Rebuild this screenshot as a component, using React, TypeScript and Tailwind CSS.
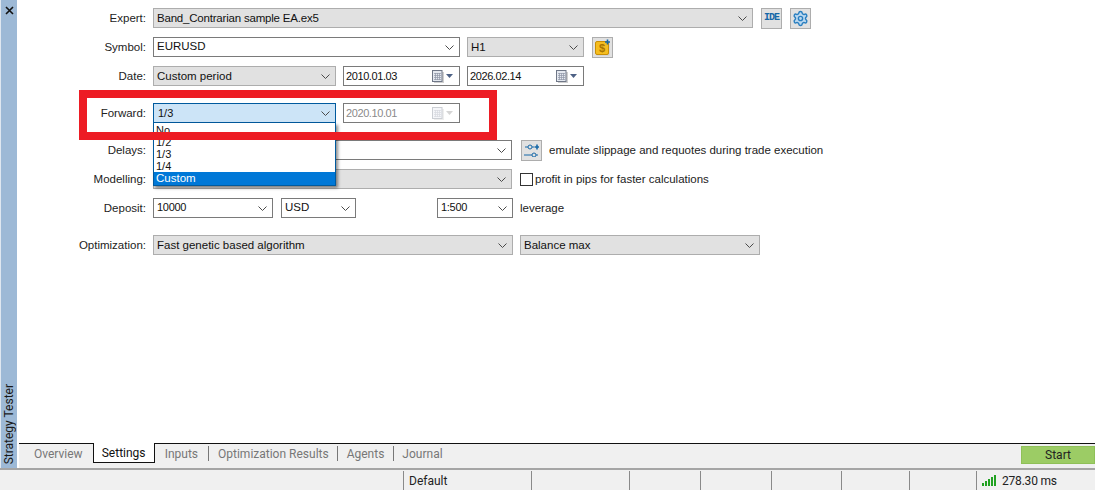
import { Settings } from "lucide-react"
import type { ReactNode } from "react"

const sans = { fontFamily: '"Liberation Sans", sans-serif' }

function Chevron() {
  return (
    <svg width="9" height="5" viewBox="0 0 9 5" className="shrink-0">
      <path d="M0.5 0.5 L4.5 4.5 L8.5 0.5" fill="none" stroke="#4a4a4a" strokeWidth="1" />
    </svg>
  )
}

function Select({ width, value, gray, num, tight }: { width: string; value?: string; gray?: boolean; num?: boolean; tight?: boolean }) {
  return (
    <div
      className={`${width} h-5 shrink-0 flex items-center justify-between pl-[3px] pr-[5px] border leading-none text-[#111] ${
        gray ? "bg-[#e1e1e1] border-[#adadad]" : "bg-white border-[#7a7a7a]"
      } ${num ? "text-[11px] tracking-[-0.3px]" : "text-[11.5px]"} ${tight ? "tracking-[-0.2px]" : ""}`}
    >
      <span className={`whitespace-pre ${gray ? "pt-[1px]" : "pb-[1px]"}`}>{value}</span>
      <Chevron />
    </div>
  )
}

function Calendar({ off }: { off?: boolean }) {
  return (
    <span className={`flex items-center gap-[2px] ${off ? "opacity-35" : ""}`}>
      <svg width="12" height="13" viewBox="0 0 12 13">
        <rect x="2" y="2" width="10" height="11" fill="#cfcfcf" />
        <rect x="0.5" y="0.5" width="9.5" height="11" fill="#e4e8ef" stroke="#6f7787" />
        <path d="M2 3.5h7M2 5.5h7M2 7.5h7M2 9.5h7M3.5 3v7M5.5 3v7M7.5 3v7" stroke="#8f97a8" strokeWidth="0.7" />
      </svg>
      <svg width="8" height="4" viewBox="0 0 8 4">
        <path d="M0 0h7L3.5 4z" fill={off ? "#888" : "#4d6185"} />
      </svg>
    </span>
  )
}

function DateBox({ value, off }: { value: string; off?: boolean }) {
  return (
    <div
      className={`w-[117px] h-5 shrink-0 flex items-center justify-between pl-[2px] pr-[5px] border bg-white border-[#7a7a7a] text-[11px] tracking-[-0.4px] leading-none ${
        off ? "text-[#8a8a8a]" : "text-[#111]"
      }`}
    >
      <span>{value}</span>
      <Calendar off={off} />
    </div>
  )
}

function IconButton({ children }: { children: ReactNode }) {
  return (
    <div className="w-[21px] h-[21px] shrink-0 flex items-center justify-center bg-[#e1e1e1] border border-[#adadad]">
      {children}
    </div>
  )
}

function Row({ label, mt, children }: { label: string; mt: string; children: ReactNode }) {
  return (
    <div className={`flex items-center h-5 ${mt}`}>
      <span className="w-[127px] pr-[7px] pt-[2px] text-right text-[11.5px] leading-none text-[#222] shrink-0">
        {label}
      </span>
      <div className="flex items-center">{children}</div>
    </div>
  )
}

function Tab({ children }: { children: string }) {
  return <span className="text-[12px] text-[#777] leading-none">{children}</span>
}

export default function App() {
  return (
    <div className="relative w-[1095px] h-[490px] overflow-hidden bg-white flex flex-col" style={sans}>
      <div className="flex flex-1 min-h-0">
        {/* side strip */}
        <div className="w-[17px] shrink-0 bg-[#9db9d6] border-l border-[#dfe7f0] flex flex-col items-center justify-between pt-[6px] pb-[4px]">
          <svg width="9" height="9" viewBox="0 0 9 9">
            <path d="M1 1l7 7M8 1L1 8" stroke="#111" strokeWidth="1.6" />
          </svg>
          <span className="[writing-mode:vertical-rl] rotate-180 text-[12px] leading-none text-[#1a1a1a] font-['Roboto',sans-serif]">
            Strategy Tester
          </span>
        </div>

        <div className="flex-1 flex flex-col min-w-0 pl-[2px]">
          {/* form */}
          <div className="flex-1 pl-[7px] pt-2 relative min-h-0">
            <Row label="Expert:" mt="">
              <Select width="w-[600px]" value="Band_Contrarian sample EA.ex5" gray tight />
              <div className="ml-2">
                <IconButton>
                  <span className="text-[10px] font-bold text-[#1668a8] leading-none font-['Liberation_Mono',monospace] tracking-[-1px]">
                    IDE
                  </span>
                </IconButton>
              </div>
              <div className="ml-2">
                <IconButton>
                  <Settings size={17} fill="#bcd9f0" stroke="#2a7fc0" strokeWidth={2} />
                </IconButton>
              </div>
            </Row>

            <Row label="Symbol:" mt="mt-[9px]">
              <Select width="w-[307px]" value="EURUSD" />
              <div className="ml-[7px]">
                <Select width="w-[117px]" value="H1" gray />
              </div>
              <div className="ml-2">
                <IconButton>
                  <svg width="17" height="17" viewBox="0 0 17 17">
                    <rect x="2.5" y="3.5" width="13" height="13" fill="#c9c9c9" />
                    <rect x="1.5" y="2.5" width="13" height="13" rx="1.5" fill="#f5bd1f" stroke="#c98f06" />
                    <text x="8" y="13" textAnchor="middle" fontSize="11" fontWeight="700" fill="#a87400" fontFamily="Liberation Sans">
                      $
                    </text>
                    <path d="M13.5 0.5v5M11 3h5" stroke="#1668a8" strokeWidth="1.6" />
                  </svg>
                </IconButton>
              </div>
            </Row>

            <Row label="Date:" mt="mt-[9px]">
              <Select width="w-[183px]" value="Custom period" gray />
              <div className="ml-[7px]">
                <DateBox value="2010.01.03" />
              </div>
              <div className="ml-[7px]">
                <DateBox value="2026.02.14" />
              </div>
            </Row>

            <Row label="Forward:" mt="mt-[17px]">
              <div className="w-[183px] h-5 flex items-center justify-between pl-[4px] pr-[5px] border border-[#005a9e] bg-[#cce4f7] text-[11px] leading-none text-[#111]">
                <span>1/3</span>
                <Chevron />
              </div>
              <div className="ml-[7px]">
                <DateBox value="2020.10.01" off />
              </div>
            </Row>

            <Row label="Delays:" mt="mt-[17px]">
              <Select width="w-[359px]" />
              <div className="ml-[9px]">
                <IconButton>
                  <svg width="15" height="13" viewBox="0 0 15 13" fill="none" stroke="#1668a8" strokeWidth="1">
                    <path d="M1 3h3M8 3h2M0 11h8M12 11h2" />
                    <circle cx="6" cy="3" r="2" />
                    <circle cx="10" cy="11" r="2" />
                    <path d="M13 0.5v5M10.5 3h5" strokeWidth="1.6" />
                  </svg>
                </IconButton>
              </div>
              <span className="ml-[7px] pt-[2px] text-[11.5px] text-[#222] leading-none">
                emulate slippage and requotes during trade execution
              </span>
            </Row>

            <Row label="Modelling:" mt="mt-[9px]">
              <Select width="w-[359px]" gray />
              <span className="ml-2 w-[13px] h-[13px] border border-[#333] bg-white shrink-0" />
              <span className="ml-[2px] pt-[2px] text-[11.5px] text-[#222] leading-none">
                profit in pips for faster calculations
              </span>
            </Row>

            <Row label="Deposit:" mt="mt-[9px]">
              <Select width="w-[120px]" value="10000" num />
              <div className="ml-2">
                <Select width="w-[75px]" value="USD" />
              </div>
              <div className="ml-[81px]">
                <Select width="w-[76px]" value="1:500" num />
              </div>
              <span className="ml-[7px] pt-[2px] text-[11.5px] text-[#222] leading-none">leverage</span>
            </Row>

            <Row label="Optimization:" mt="mt-[17px]">
              <Select width="w-[360px]" value="Fast genetic based algorithm" gray />
              <div className="ml-[7px]">
                <Select width="w-[240px]" value="Balance max" gray />
              </div>
            </Row>
          </div>

          {/* tabs */}
          <div className="h-[25px] shrink-0 flex items-start border-t border-[#111] bg-[#f0f0f0] font-['Roboto',sans-serif]">
            <div className="flex items-center h-[19px] pl-[15px]">
              <Tab>Overview</Tab>
            </div>
            <div className="ml-[10px] w-[62px] h-[20px] -mt-px flex items-center justify-center bg-white border-x border-b border-[#111] text-[12px] leading-none text-[#111]">
              Settings
            </div>
            <div className="flex items-center h-[19px] pl-[10px]">
              <Tab>Inputs</Tab>
              <span className="w-px h-[15px] bg-[#777] mx-[9.5px]" />
              <Tab>Optimization Results</Tab>
              <span className="w-px h-[15px] bg-[#777] mx-[8.5px]" />
              <Tab>Agents</Tab>
              <span className="w-px h-[15px] bg-[#777] mx-[8.5px]" />
              <Tab>Journal</Tab>
            </div>
            <div className="ml-auto mt-[2px] w-[74px] h-[18px] flex items-center justify-center bg-[#9ccc65] border border-[#8fc058] text-[12px] leading-none text-[#222]">
              Start
            </div>
          </div>
        </div>
      </div>

      {/* status bar */}
      <div className="h-[22px] shrink-0 flex items-stretch border-t-2 border-[#a5a5a5] bg-[#f0f0f0] pt-px text-[12px] text-[#222] font-['Roboto',sans-serif]">
        <div className="w-[403px] shrink-0" />
        <div className="w-[128px] border-l border-[#8a8a8a] pl-[5px] flex items-center leading-none">Default</div>
        <div className="w-[98px] border-l border-[#8a8a8a]" />
        <div className="w-[71px] border-l border-[#8a8a8a]" />
        <div className="w-[71px] border-l border-[#8a8a8a]" />
        <div className="w-[70px] border-l border-[#8a8a8a]" />
        <div className="w-[68px] border-l border-[#8a8a8a]" />
        <div className="w-[67px] border-l border-[#8a8a8a]" />
        <div className="flex-1 border-l border-[#8a8a8a] pl-[5px] flex items-center gap-[5px] leading-none tracking-[-0.2px]">
          <svg width="15" height="11" viewBox="0 0 15 11" fill="#21a121">
            <rect x="0" y="8" width="2" height="3" />
            <rect x="3" y="6" width="2" height="5" />
            <rect x="6" y="4" width="2" height="7" />
            <rect x="9" y="2" width="2" height="9" />
            <rect x="12" y="0" width="2" height="11" />
          </svg>
          278.30 ms
        </div>
      </div>

      {/* open combo list */}
      <div className="absolute left-[153px] top-[123px] w-[183px] h-[63px] bg-white border border-[#005a9e] border-t-0 shadow-[2px_2px_3px_rgba(0,0,0,0.45)] text-[11px] leading-[12px] text-[#111] pt-[1px]">
        <div className="pl-[2px] h-[12px]">No</div>
        <div className="pl-[2px] h-[12px]">1/2</div>
        <div className="pl-[2px] h-[12px]">1/3</div>
        <div className="pl-[2px] h-[12px]">1/4</div>
        <div className="pl-[2px] h-[13px] bg-[#0078d7] text-white text-[11.5px]">Custom</div>
      </div>

      {/* highlight frame */}
      <div className="absolute left-[79px] top-[90px] w-[418px] h-[50px] border-8 border-[#ed1c24] pointer-events-none" />
    </div>
  )
}
